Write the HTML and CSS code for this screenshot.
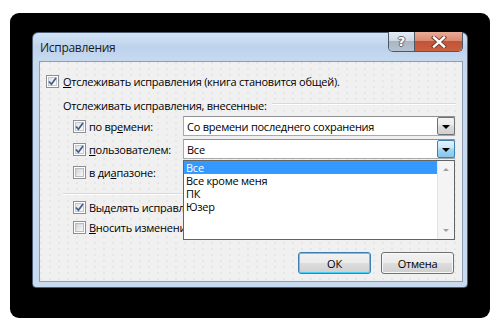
FILE: index.html
```html
<!DOCTYPE html>
<html lang="ru">
<head>
<meta charset="utf-8">
<title>Исправления</title>
<link rel="stylesheet" href="styles.css">
</head>
<body>
<div class="backdrop">
  <div class="dialog">
    <div class="titlebar">
      <span class="title">Исправления</span>
      <div class="caption-btns">
        <div class="cap help">?</div>
        <div class="cap close">
          <svg width="16" height="12" viewBox="0 0 16 12"><path d="M3 1.5 L13 10.5 M13 1.5 L3 10.5" stroke="#6b3a2c" stroke-width="4.2" stroke-linecap="square"/><path d="M3 1.5 L13 10.5 M13 1.5 L3 10.5" stroke="#ffffff" stroke-width="2.4" stroke-linecap="square"/></svg>
        </div>
      </div>
    </div>
    <div class="panel">
      <div class="row main-row">
        <span class="cbx checked"><svg width="9" height="9" viewBox="0 0 9 9"><path d="M1 4.5 L3.4 7.2 L8 1" fill="none" stroke="#3f5a8a" stroke-width="1.7"/></svg></span>
        <span class="lbl"><u>О</u>тслеживать исправления (книга становится общей).</span>
      </div>
      <div class="group-head">
        <span>Отслеживать исправления, внесенные:</span>
        <span class="rule"></span>
      </div>
      <div class="opt-row">
        <span class="cbx checked"><svg width="9" height="9" viewBox="0 0 9 9"><path d="M1 4.5 L3.4 7.2 L8 1" fill="none" stroke="#3f5a8a" stroke-width="1.7"/></svg></span>
        <span class="opt-lbl">по вр<u>е</u>мени:</span>
        <div class="combo">
          <span class="combo-text">Со времени последнего сохранения</span>
          <span class="drop-btn"><span class="tri"></span></span>
        </div>
      </div>
      <div class="opt-row">
        <span class="cbx checked"><svg width="9" height="9" viewBox="0 0 9 9"><path d="M1 4.5 L3.4 7.2 L8 1" fill="none" stroke="#3f5a8a" stroke-width="1.7"/></svg></span>
        <span class="opt-lbl"><u>п</u>ользователем:</span>
        <div class="combo combo-open">
          <span class="combo-text">Все</span>
          <span class="drop-btn hot"><span class="tri"></span></span>
        </div>
      </div>
      <div class="opt-row">
        <span class="cbx"></span>
        <span class="opt-lbl">в ди<u>а</u>пазоне:</span>
      </div>
      <div class="sep"></div>
      <div class="row sub-row first-sub">
        <span class="cbx checked"><svg width="9" height="9" viewBox="0 0 9 9"><path d="M1 4.5 L3.4 7.2 L8 1" fill="none" stroke="#3f5a8a" stroke-width="1.7"/></svg></span>
        <span class="lbl clipped">Выделять исправления на экране</span>
      </div>
      <div class="row sub-row">
        <span class="cbx"></span>
        <span class="lbl clipped"><u>В</u>носить изменения на отдельный лист</span>
      </div>
      <div class="buttons">
        <button class="btn default">ОК</button>
        <button class="btn">Отмена</button>
      </div>
      <div class="dropdown">
        <div class="items">
          <div class="item selected">Все</div>
          <div class="item">Все кроме меня</div>
          <div class="item">ПК</div>
          <div class="item">Юзер</div>
        </div>
        <div class="scrollbar">
          <span class="arrow up"></span>
          <span class="arrow down"></span>
        </div>
      </div>
    </div>
  </div>
</div>
</body>
</html>
```
FILE: styles.css
```css
* { box-sizing: border-box; }
html, body { margin: 0; padding: 0; background: #ffffff; }
body {
  width: 501px;
  height: 321px;
  overflow: hidden;
  font-family: "Open Sans", "Noto Sans", sans-serif;
  font-size: 11px;
  letter-spacing: -0.25px;
  color: #000;
}
u { text-decoration: underline; text-underline-offset: 1px; }

.backdrop {
  margin: 13px 0 0 10px;
  width: 480px;
  height: 305px;
  background: #000;
  border-radius: 9px;
  padding: 19px 0 0 22px;
}

.dialog {
  position: relative;
  width: 436px;
  height: 256px;
  border: 1px solid #4e5e72;
  border-radius: 6px 6px 4px 4px;
  background: linear-gradient(180deg, #d3e3f4 0px, #bdd3ec 14px, #c6d9ef 28px, #c8dbf0 100%);
  padding: 0 4px 5px 6px;
  display: flex;
  flex-direction: column;
}

.titlebar {
  height: 28px;
  display: flex;
  align-items: center;
  padding-left: 1px;
}
.title {
  font-size: 12px;
  letter-spacing: -0.3px;
  color: #1a1a1a;
  margin-top: 1px;
}

.caption-btns {
  position: absolute;
  top: -1px;
  right: 4px;
  display: flex;
  height: 20px;
  border: 1px solid #4d5866;
  border-top: none;
  border-radius: 0 0 5px 5px;
  overflow: hidden;
}
.cap {
  height: 19px;
  display: flex;
  align-items: center;
  justify-content: center;
}
.help {
  width: 26px;
  border-right: 1px solid #4d5866;
  background: linear-gradient(180deg, #e4ecf5 0%, #cdd9e6 45%, #a9b5c3 50%, #b6c2cf 100%);
  color: #ffffff;
  font-family: "DejaVu Sans", sans-serif;
  font-weight: bold;
  font-size: 13px;
  letter-spacing: 0;
  text-shadow: -1px 0 #5b6574, 1px 0 #5b6574, 0 -1px #5b6574, 0 1px #5b6574;
}
.close {
  width: 47px;
  background: linear-gradient(180deg, #e9ab97 0%, #dc8a72 45%, #c45338 50%, #c9603f 100%);
}

.panel {
  position: relative;
  flex: 1;
  border: 1px solid #8e9db0;
  background-color: #f0f0f0;
  background-image: radial-gradient(circle at 1px 1px, #e0e0e0 0.6px, transparent 0.9px);
  background-size: 9px 6px;
  padding: 13px 0 0 6px;
  display: flex;
  flex-direction: column;
}

.cbx {
  flex: none;
  width: 13px;
  height: 13px;
  border: 1px solid #8f8f8f;
  background: #fff;
  position: relative;
  display: inline-block;
}
.cbx::before {
  content: "";
  position: absolute;
  inset: 1px;
  background: linear-gradient(135deg, #cdd1d6 0%, #e6e8eb 55%, #f8f8f8 100%);
  border: 1px solid #b9bcc0;
}
.cbx.checked::before {
  background: linear-gradient(135deg, #dfe2e6 0%, #f1f2f3 60%, #fafafa 100%);
  border-color: #c5c8cc;
}
.cbx svg {
  position: absolute;
  left: 1px;
  top: 1px;
  z-index: 1;
}

.row {
  display: flex;
  align-items: center;
  height: 13px;
}
.lbl {
  margin-left: 4px;
  white-space: nowrap;
  line-height: 13px;
}
.lbl.clipped {
  width: 94px;
  overflow: hidden;
}

.group-head {
  margin-top: 10px;
  height: 14px;
  display: flex;
  align-items: center;
  padding-left: 17px;
  padding-right: 6px;
  white-space: nowrap;
}
.rule {
  flex: 1;
  height: 2px;
  margin-left: 5px;
  margin-top: -3px;
  border-top: 1px solid #d5d9dd;
  border-bottom: 1px solid #ffffff;
}

.opt-row {
  display: flex;
  align-items: center;
  height: 20px;
  margin-top: 3px;
  padding-left: 27px;
}
.group-head + .opt-row { margin-top: 4px; }
.opt-lbl {
  width: 94px;
  margin-left: 3px;
  white-space: nowrap;
}
.combo {
  width: 272px;
  height: 20px;
  border: 1px solid #a7a9ad;
  border-top-color: #8e9094;
  background: #fff;
  display: flex;
  align-items: center;
  padding: 1px 0 1px 3px;
}
.combo-text { flex: 1; white-space: nowrap; }
.drop-btn {
  width: 18px;
  height: 18px;
  margin-right: -1px;
  border: 1px solid #707070;
  border-radius: 2px;
  background: linear-gradient(180deg, #f3f3f3 0%, #ebebeb 45%, #dcdcdc 50%, #d0d0d0 100%);
  display: flex;
  align-items: center;
  justify-content: center;
}
.drop-btn.hot {
  border-color: #3c7fb1;
  background: linear-gradient(180deg, #e3f3fc 0%, #c7e6f8 45%, #a6d6f2 50%, #84c6ee 100%);
}
.tri {
  width: 0;
  height: 0;
  border-left: 4px solid transparent;
  border-right: 4px solid transparent;
  border-top: 4px solid #000;
  margin-top: 1px;
}

.sep {
  margin: 11px 7px 0 17px;
  height: 2px;
  flex: none;
  border-top: 1px solid #d5d9dd;
  border-bottom: 1px solid #ffffff;
}
.sub-row { padding-left: 27px; }
.sub-row .lbl { margin-left: 3px; }
.first-sub { margin-top: 6px; }
.sub-row + .sub-row { margin-top: 7px; }

.buttons {
  margin-top: auto;
  margin-bottom: 7px;
  display: flex;
  justify-content: flex-end;
  gap: 10px;
  padding-right: 8px;
}
.btn {
  width: 73px;
  height: 22px;
  border: 1px solid #707070;
  border-radius: 3px;
  background: linear-gradient(180deg, #f2f2f2 0%, #ebebeb 48%, #dddddd 52%, #cfcfcf 100%);
  font-family: inherit;
  font-size: 11px;
  letter-spacing: -0.25px;
  color: #000;
  padding: 0;
  box-shadow: inset 0 0 0 1px #f8f8f8;
}
.btn.default {
  border-color: #3c7fb1;
  box-shadow: inset 0 0 0 1px #48d0f8;
}

.dropdown {
  position: absolute;
  left: 143px;
  top: 98px;
  width: 272px;
  height: 80px;
  border: 1px solid #646464;
  background: #fff;
  display: flex;
}
.items { flex: 1; }
.item {
  height: 13px;
  line-height: 13px;
  padding-left: 2px;
  white-space: nowrap;
}
.item.selected {
  background: #3399ff;
  color: #fff;
  outline: 1px dotted #e07a1a;
  outline-offset: -1px;
}
.scrollbar {
  width: 17px;
  border-left: 1px solid #e2e2e2;
  background: #f4f4f4;
  display: flex;
  flex-direction: column;
  justify-content: space-between;
  align-items: center;
  padding: 7px 0 7px;
}
.arrow {
  width: 0;
  height: 0;
  border-left: 3px solid transparent;
  border-right: 3px solid transparent;
}
.arrow.up { border-bottom: 3px solid #a0a0a0; }
.arrow.down { border-top: 3px solid #a0a0a0; }
```
